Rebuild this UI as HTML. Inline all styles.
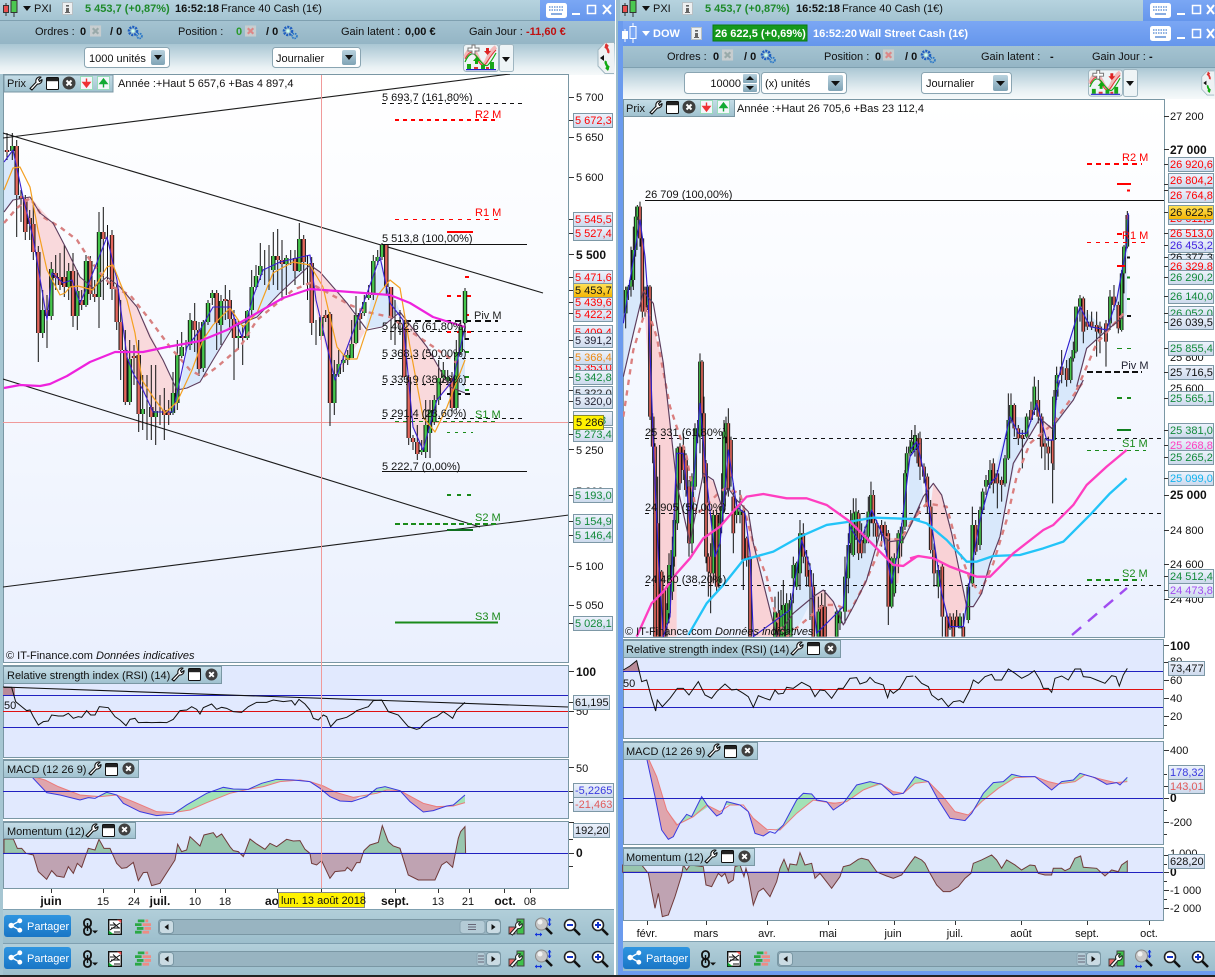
<!DOCTYPE html>
<html><head><meta charset="utf-8"><title>Charts</title>
<style>
html,body{margin:0;padding:0;background:#fff;overflow:hidden}
svg{display:block;font-family:"Liberation Sans",sans-serif;font-size:11px}
text{fill:#111}
.b{font-weight:bold}
.tg{fill:url(#tag);stroke:#7d98a6;stroke-width:1}
.pn{fill:#e1e9fe;stroke:#7a97a4;stroke-width:1}
.bar{fill:url(#bar);stroke:#7a97a4;stroke-width:1}
.sel{fill:#fff;stroke:#8aa5b2;stroke-width:1}
.btn{fill:url(#btn)}
.n{fill:none}
</style></head><body>
<svg width="1215" height="977" viewBox="0 0 1215 977" xmlns="http://www.w3.org/2000/svg">
<defs>
<linearGradient id="tt" x1="0" y1="0" x2="0" y2="1"><stop offset="0" stop-color="#b6d3df"/><stop offset="1" stop-color="#a3c3d1"/></linearGradient>
<linearGradient id="r2" x1="0" y1="0" x2="0" y2="1"><stop offset="0" stop-color="#a4c3d1"/><stop offset="1" stop-color="#94b5c5"/></linearGradient>
<linearGradient id="r3" x1="0" y1="0" x2="0" y2="1"><stop offset="0" stop-color="#a9c6d3"/><stop offset=".75" stop-color="#e9f1f4"/><stop offset="1" stop-color="#f6f9fa"/></linearGradient>
<linearGradient id="bl" x1="0" y1="0" x2="0" y2="1"><stop offset="0" stop-color="#7ba7f4"/><stop offset="1" stop-color="#6596ec"/></linearGradient>
<linearGradient id="bg" x1="0" y1="0" x2="0" y2="1"><stop offset="0" stop-color="#ffffff"/><stop offset=".35" stop-color="#f9fbff"/><stop offset="1" stop-color="#eaf0fe"/></linearGradient>
<linearGradient id="tag" x1="0" y1="0" x2="0" y2="1"><stop offset="0" stop-color="#eef3fd"/><stop offset="1" stop-color="#ccd9ec"/></linearGradient>
<linearGradient id="bar" x1="0" y1="0" x2="0" y2="1"><stop offset="0" stop-color="#c6dee8"/><stop offset="1" stop-color="#9fc1cf"/></linearGradient>
<linearGradient id="btn" x1="0" y1="0" x2="0" y2="1"><stop offset="0" stop-color="#b9d2de"/><stop offset="1" stop-color="#7fa3b5"/></linearGradient>
<linearGradient id="bt" x1="0" y1="0" x2="0" y2="1"><stop offset="0" stop-color="#b2cfda"/><stop offset="1" stop-color="#9cbecc"/></linearGradient>
<linearGradient id="yl" x1="0" y1="0" x2="0" y2="1"><stop offset="0" stop-color="#ffe25a"/><stop offset="1" stop-color="#f4b400"/></linearGradient>
<linearGradient id="sh" x1="0" y1="0" x2="0" y2="1"><stop offset="0" stop-color="#2f95e0"/><stop offset="1" stop-color="#1a76c6"/></linearGradient>
<clipPath id="c1"><rect x="3" y="74" width="565" height="588"/></clipPath>
<clipPath id="c2"><rect x="623" y="99" width="541" height="538"/></clipPath>
<clipPath id="lup"><rect x="3" y="822" width="565" height="31"/></clipPath>
<clipPath id="ldn"><rect x="3" y="853" width="565" height="35"/></clipPath>
<clipPath id="rup"><rect x="623" y="848" width="541" height="24"/></clipPath>
<clipPath id="rdn"><rect x="623" y="872" width="541" height="48"/></clipPath>
<symbol id="wr" viewBox="0 0 14 15"><path d="M1 12.5L7 6.2A4 4 0 0 1 12 1.2L9.5 3.5 10.5 5.5 13 3.6A4 4 0 0 1 8.5 8L3 14z" fill="#fff" stroke="#111" stroke-width="1.1" stroke-linejoin="round"/></symbol>
<symbol id="wn" viewBox="0 0 13 13"><rect x=".5" y=".5" width="12" height="12" fill="#fff" stroke="#111" rx="1"/><rect x="1" y="1" width="11" height="3.2" fill="#222"/></symbol>
<symbol id="cl" viewBox="0 0 14 14"><circle cx="7" cy="7" r="6.5" fill="#3f3f3f"/><path d="M4.5 4.5l5 5m0-5l-5 5" stroke="#fff" stroke-width="2"/></symbol>
<symbol id="ad" viewBox="0 0 13 14"><rect x=".5" y=".5" width="12" height="13" fill="#f4f6fb" stroke="#9db"/><path d="M6.5 2.5v5M3 6.5l3.5 4.5 3.5-4.5z" fill="#e33" stroke="#e33" stroke-width="1.4"/></symbol>
<symbol id="au" viewBox="0 0 13 14"><rect x=".5" y=".5" width="12" height="13" fill="#f4f6fb" stroke="#9db"/><path d="M6.5 11.5v-5M3 7.5l3.5-4.5 3.5 4.5z" fill="#1a3" stroke="#1a3" stroke-width="1.4"/></symbol>
<symbol id="gr" viewBox="0 0 16 15"><circle cx="6" cy="6" r="4" fill="none" stroke="#1f5fc0" stroke-width="2.6" stroke-dasharray="2 1"/><circle cx="6" cy="6" r="1.6" fill="#cfe" /><circle cx="12.5" cy="11" r="2.4" fill="none" stroke="#2b78c8" stroke-width="1.8" stroke-dasharray="1.5 .8"/></symbol>
<symbol id="xg" viewBox="0 0 13 13"><rect width="12" height="12" y=".5" fill="#c7cdcf"/><path d="M3 3.5l6 6m0-6l-6 6" stroke="#9aa" stroke-width="2.4"/></symbol>
<symbol id="xr" viewBox="0 0 13 13"><rect width="12" height="12" y=".5" fill="#c7cdcf"/><path d="M3 3.5l6 6m0-6l-6 6" stroke="#d88" stroke-width="2.4"/></symbol>
<symbol id="kb" viewBox="0 0 21 15"><rect width="21" height="15" rx="2.5" fill="#fff"/><path d="M3 4h15M3 7h15" stroke="#6a98d8" stroke-width="1.4" stroke-dasharray="1.5 1"/><path d="M5 11h11" stroke="#6a98d8" stroke-width="1.6"/></symbol>
<symbol id="ci" viewBox="0 0 15 20"><path d="M3 6v13M11 0v20" stroke="#333" stroke-width="1"/><rect x=".5" y="8.5" width="5" height="7" fill="#e85050" stroke="#333"/><rect x="8" y="3.5" width="6" height="12" fill="#4cc850" stroke="#333"/></symbol>
<symbol id="cw" viewBox="0 0 15 20"><path d="M3 6v13M11 0v20" stroke="#fff" stroke-width="1"/><rect x=".5" y="8.5" width="5" height="7" fill="#fff" stroke="#fff"/><rect x="8" y="3.5" width="6" height="12" fill="#7ba7f4" stroke="#fff"/></symbol>
<symbol id="ib" viewBox="0 0 11 13"><rect width="11" height="13" fill="#d8dfe2"/><rect x=".5" y=".5" width="10" height="12" fill="#eef0f1" stroke="#b8c0c4"/><path d="M4 3h3v1.6H4zM4 6h3v4h1v1H3v-1h1z" fill="#666"/></symbol>
<symbol id="ch" viewBox="0 0 36 28"><rect x=".5" y=".5" width="35" height="27" rx="3" fill="#eef4f6" stroke="#9fb6c1"/><path d="M2 14Q8 -2 14 12T24 16T33 3" fill="none" stroke="#f3b8b8" stroke-width="4"/><path d="M2 15Q9 2 14 14T24 18T33 6" fill="none" stroke="#d33" stroke-width="1"/><path d="M2 18Q8 4 15 14T25 21T33 9" fill="none" stroke="#1a1" stroke-width="1.2"/><path d="M5 4h4v-3h3v3h4v3h-4v3h-3v-3h-4z" fill="#fff" stroke="#777"/><path d="M12 20h3v-3h2l-3.5-4-3.5 4h2z" fill="#1a1"/><path d="M23 4h3v3h2l-3.5 4-3.5-4h2z" fill="#d22"/><path d="M4 20h4v5H4zM18 21h4v4h-4zM27 18h4v7h-4z" fill="#19a619"/><path d="M11 23h4v2h-4zM23 23h3v2h-3z" fill="#d33"/><path d="M3 25.6h30" stroke="#22c" stroke-width="1.2"/></symbol>
<symbol id="sd" viewBox="0 0 18 32"><path d="M17 .5H8L1 8v16l7 7.5h9" fill="#eef2f4" stroke="#9fb6c1"/><path d="M3 16l4-3v6z" fill="#111"/><path d="M10 2c-3 3 3 6 1 9M8 6l3-3" stroke="#d33" stroke-width="2.4" fill="none"/><path d="M10 28c3-3-3-6-1-9M12 24l-3 3" stroke="#1a1" stroke-width="2.4" fill="none"/></symbol>
<symbol id="sha" viewBox="0 0 16 16"><path d="M12.5 3L3.5 8l9 5" stroke="#fff" stroke-width="1.5" fill="none"/><circle cx="12.6" cy="3" r="2.6" fill="#fff"/><circle cx="3.4" cy="8" r="2.9" fill="#fff"/><circle cx="12.6" cy="13" r="2.6" fill="#fff"/></symbol>
<symbol id="lk" viewBox="0 0 16 18"><rect x="2" y="1" width="7" height="8" rx="3.4" fill="none" stroke="#111" stroke-width="1.8"/><rect x="2" y="9" width="7" height="8" rx="3.4" fill="none" stroke="#111" stroke-width="1.8"/><path d="M5.5 5v8" stroke="#111" stroke-width="1.4"/><path d="M10 12.5h6l-3 3z" fill="#111"/></symbol>
<symbol id="dc" viewBox="0 0 14 16"><rect x=".7" y=".7" width="12.6" height="14.6" fill="#fff" stroke="#111" stroke-width="1.4"/><path d="M2 11L12 4M2 6h6M6 13h6M3 9h9M5 3.5L11 9" stroke="#111" stroke-width="1"/><path d="M9 .7h4.3v3.3z" fill="#e55"/><path d="M.7 11.5V15.3h5z" fill="#1a3"/></symbol>
<symbol id="br" viewBox="0 0 17 16"><path d="M0 4h7v3H0zM0 12h7v3H0zM2 8h7v3H2zM3 0h7v3H3z" fill="#2ba845"/><path d="M8 4h9v3H8zM10 8h7v3h-7zM8 12h7v3H8zM11 0h3v3h-3z" fill="#ee8c84"/></symbol>
<symbol id="wc" viewBox="0 0 17 18"><rect x="1" y="9" width="6" height="7" fill="#e66" stroke="#444"/><rect x="9" y="1" width="7" height="15" fill="#3fc24a" stroke="#444"/><path d="M2 15.5L8 9A3.6 3.6 0 0 1 12.5 4L10.5 6l1 1.6L14 5.6A3.6 3.6 0 0 1 10 10.5L4.5 17z" fill="#fff" stroke="#222"/></symbol>
<symbol id="za" viewBox="0 0 20 20"><circle cx="7.5" cy="7" r="6" fill="#c8c8c8" stroke="#888"/><circle cx="6" cy="5" r="2.5" fill="#f2f2f2"/><path d="M12 11l6 6" stroke="#111" stroke-width="2.6"/><path d="M1 17.5h7M15.5 1v8" stroke="#13d" stroke-width="1.3"/><path d="M1 17.5l2-2v4zM8 17.5l-2-2v4zM15.5 1l-2 2.4h4zM15.5 9l-2-2.4h4z" fill="#13d"/></symbol>
<symbol id="zm" viewBox="0 0 18 18"><circle cx="7" cy="7" r="5.5" fill="#fff" stroke="#222" stroke-width="1.6"/><path d="M4 7h6" stroke="#13c" stroke-width="2"/><path d="M11 11l6 6" stroke="#111" stroke-width="2.6"/></symbol>
<symbol id="zp" viewBox="0 0 18 18"><circle cx="7" cy="7" r="5.5" fill="#fff" stroke="#222" stroke-width="1.6"/><path d="M4 7h6M7 4v6" stroke="#13c" stroke-width="2"/><path d="M11 11l6 6" stroke="#111" stroke-width="2.6"/></symbol>
<path id="m1" transform="translate(0,660) scale(.3333)" d="M12 580V537L40 537 52 565 65 565 78 580 100 585 115 635 140 658 155 632 170 648 192 652 205 620 220 640 232 610 245 622 265 565 285 570 297 538 312 565 330 565 350 610 365 625 380 623 400 607 415 662 430 638 442 637 455 677 480 670 525 600 533 553 545 575 560 570 570 530 600 558 612 525 640 518 650 532 665 522 690 560 700 572 715 575 730 590 750 537 770 552 795 568 810 550 830 560 860 538 880 543 900 542 915 568 930 580 935 610 950 615 965 602 990 655 1005 635 1035 632 1042 622 1055 633 1070 608 1080 608 1092 572 1110 555 1135 547 1147 497 1165 545 1180 558 1200 565 1225 645 1255 660 1305 660 1325 615 1340 605 1358 622 1375 535 1382 515 1395 500 1397 580z"/>
<path id="m2" transform="translate(620,630) scale(.3333)" d="M8 727V705L65 705 85 730 105 835 115 790 127 860 145 855 165 800 185 735 190 705 200 720 210 705 250 710 258 765 275 770 295 730 305 740 315 730 325 760 340 750 345 710 360 705 372 740 378 715 385 740 400 825 415 785 430 775 450 800 470 755 480 715 492 688 505 722 510 702 530 705 540 668 555 705 575 700 585 745 600 730 635 775 660 740 670 710 690 705 715 688 725 685 745 690 770 725 780 730 800 738 820 745 845 735 870 700 885 680 905 690 915 700 930 730 950 765 970 785 990 785 1015 770 1035 745 1053 730 1060 700 1085 690 1115 675 1130 690 1145 715 1160 690 1185 705 1205 720 1230 705 1245 707 1255 730 1275 735 1295 735 1300 715 1325 715 1335 722 1350 715 1365 685 1382 678 1390 712 1430 715 1455 738 1475 720 1495 725 1505 705 1522 693 1522 727z"/>
</defs>

<rect width="1215" height="977" fill="#fff"/>

<!-- LEFT WINDOW chrome -->
<rect x="0" y="0" width="615" height="21" fill="url(#tt)"/>
<rect x="540" y="0" width="75" height="21" fill="url(#bl)"/>
<path d="M0 20.5H540M0 43.5H615" stroke="#7fa0b0"/>
<rect x="0" y="21" width="615" height="23" fill="url(#r2)"/>
<rect x="0" y="44" width="615" height="31" fill="url(#r3)"/>
<use href="#ci" x="3" y="-3" width="15" height="20"/>
<path d="M23 6h8l-4 5z" fill="#111"/>
<text x="34" y="12">PXI</text>
<use href="#ib" x="62" y="2" width="11" height="13"/>
<text x="85" y="12" style="fill:#1e8a2a" class="b">5 453,7 (+0,87%)</text>
<text x="175" y="12" class="b">16:52:18</text>
<text x="221" y="12">France 40 Cash (1€)</text>
<use href="#kb" x="546" y="3" width="21" height="15"/>
<path d="M572 14h8" stroke="#fff" stroke-width="2"/><rect x="587.5" y="5.5" width="8" height="8" class="n" stroke="#fff" stroke-width="1.5"/><path d="M603 5l8 9m0-9l-8 9" stroke="#fff" stroke-width="2"/>

<text x="35" y="35">Ordres :</text><text x="80" y="35" class="b">0</text><use href="#xg" x="90" y="25" width="12" height="12"/><text x="110" y="35" class="b">/ 0</text><use href="#gr" x="127" y="25" width="16" height="15"/>
<text x="178" y="35">Position :</text><text x="236" y="35" class="b" style="fill:#2a9a2a">0</text><use href="#xr" x="245" y="25" width="12" height="12"/><text x="266" y="35" class="b">/ 0</text><use href="#gr" x="282" y="25" width="16" height="15"/>
<text x="341" y="35">Gain latent :</text><text x="405" y="35" class="b">0,00 €</text>
<text x="469" y="35">Gain Jour :</text><text x="526" y="35" class="b" style="fill:#c01010">-11,60 €</text>

<rect x="84.5" y="47.5" width="85" height="20" rx="3" class="sel"/><text x="89" y="62">1000 unités</text><rect x="151" y="50" width="14" height="15" rx="2" class="btn"/><path d="M154 55h8l-4 5z" fill="#111"/>
<rect x="272.5" y="47.5" width="88" height="20" rx="3" class="sel"/><text x="276" y="62">Journalier</text><rect x="342" y="50" width="14" height="15" rx="2" class="btn"/><path d="M345 55h8l-4 5z" fill="#111"/>
<use href="#ch" x="463" y="44" width="36" height="28"/><rect x="499.5" y="44.5" width="14" height="27" rx="2" fill="#eef4f6" stroke="#9fb6c1"/><path d="M502 57h8l-4 5z" fill="#111"/>
<use href="#sd" x="597" y="42" width="18" height="32"/>

<!-- RIGHT WINDOW chrome -->
<rect x="616" y="0" width="4" height="977" fill="#9bbccb"/>
<rect x="620" y="0" width="595" height="21" fill="url(#tt)"/>
<rect x="1143" y="0" width="72" height="21" fill="url(#bl)"/>
<rect x="618" y="21" width="597" height="25" fill="url(#bl)"/>
<rect x="618" y="21" width="5" height="956" fill="#6b9bee"/>
<rect x="623" y="46" width="592" height="22" fill="url(#r2)"/>
<rect x="623" y="67" width="592" height="32" fill="url(#r3)"/>
<path d="M623 67.5H1215" stroke="#7fa0b0"/>
<use href="#ci" x="622" y="-3" width="15" height="20"/>
<path d="M642 6h8l-4 5z" fill="#111"/><text x="653" y="12">PXI</text>
<use href="#ib" x="682" y="2" width="11" height="13"/>
<text x="705" y="12" class="b" style="fill:#1e8a2a">5 453,7 (+0,87%)</text>
<text x="796" y="12" class="b">16:52:18</text>
<text x="842" y="12">France 40 Cash (1€)</text>
<use href="#kb" x="1150" y="3" width="21" height="15"/>
<path d="M1177 14h8" stroke="#fff" stroke-width="2"/><rect x="1192.5" y="5.5" width="8" height="8" class="n" stroke="#fff" stroke-width="1.5"/><path d="M1207 5l7 9m0-9l-7 9" stroke="#fff" stroke-width="2"/>
<use href="#cw" x="622" y="23" width="15" height="20"/>
<path d="M642 31h8l-4 5z" fill="#fff"/><text x="653" y="37" class="b" style="fill:#fff">DOW</text>
<use href="#ib" x="691" y="27" width="11" height="13"/>
<rect x="713" y="25" width="94" height="16" fill="#16991c" stroke="#0c7a12"/>
<text x="715" y="37" class="b" style="fill:#fff">26 622,5 (+0,69%)</text>
<text x="813" y="37" style="fill:#fff" class="b">16:52:20</text>
<text x="859" y="37" style="fill:#fff" class="b">Wall Street Cash (1€)</text>
<use href="#kb" x="1150" y="26" width="21" height="15"/>
<path d="M1177 38h8" stroke="#fff" stroke-width="2"/><rect x="1192.5" y="29.5" width="8" height="8" class="n" stroke="#fff" stroke-width="1.5"/><path d="M1207 29l7 9m0-9l-7 9" stroke="#fff" stroke-width="2"/>

<text x="667" y="60">Ordres :</text><text x="713" y="60" class="b">0</text><use href="#xg" x="722" y="49" width="12" height="12"/><text x="744" y="60" class="b">/ 0</text><use href="#gr" x="760" y="49" width="16" height="15"/>
<text x="824" y="60">Position :</text><text x="875" y="60" class="b">0</text><use href="#xr" x="883" y="49" width="12" height="12"/><text x="905" y="60" class="b">/ 0</text><use href="#gr" x="920" y="49" width="16" height="15"/>
<text x="981" y="60">Gain latent :</text><text x="1050" y="60" class="b">-</text>
<text x="1092" y="60">Gain Jour :</text><text x="1149" y="60" class="b">-</text>

<rect x="684.5" y="72.5" width="75" height="21" rx="3" class="sel"/><text x="741" y="87" text-anchor="end">10000</text>
<rect x="743" y="74" width="14" height="9" rx="1" class="btn"/><rect x="743" y="84" width="14" height="8" rx="1" class="btn"/><path d="M746 80l4-4 4 4zM746 86h8l-4 4z" fill="#111"/>
<rect x="761.5" y="72.5" width="85" height="21" rx="3" class="sel"/><text x="765" y="87">(x) unités</text><rect x="828" y="75" width="15" height="16" rx="2" class="btn"/><path d="M831 81h9l-4.500 5z" fill="#111"/>
<rect x="921.5" y="72.5" width="90" height="21" rx="3" class="sel"/><text x="926" y="87">Journalier</text><rect x="993" y="75" width="15" height="16" rx="2" class="btn"/><path d="M996 81h9l-4.500 5z" fill="#111"/>
<use href="#ch" x="1088" y="69" width="35" height="28"/><rect x="1123.5" y="69.500" width="14" height="27" rx="2" fill="#eef4f6" stroke="#9fb6c1"/><path d="M1126 81h8l-4 5z" fill="#111"/>
<use href="#sd" x="1201" y="67" width="14" height="32"/>

<!-- LEFT CHART -->
<rect x="0" y="74" width="3" height="903" fill="#a6c6d2"/>
<rect x="3.500" y="74.500" width="565" height="588" fill="url(#bg)" stroke="#7a97a4"/>
<g clip-path="url(#c1)">
<path d="M3 422.500H568" stroke="#f09a9a"/>
<g transform="translate(0,130) scale(.3333)">
<path fill="#d8e8fb" d="M12 95L40 60 60 180 60 205 40 210 12 245zM540 780L600 755 640 690 700 590 770 560 840 490 930 410 930 375 840 395 790 420 760 500 725 620 690 530 640 530 600 600 560 650z"/>
<path fill="#f9d9dc" d="M60 205L90 200 160 280 240 440 270 465 240 520 220 460 190 465 150 430 140 570 100 320zM330 420L410 530 490 690 530 790 510 845 460 845 430 780 380 680 345 450z"/>
</g>
<g transform="translate(310,200) scale(.3333)">
<path fill="#f9d9dc" d="M0 195L30 215 110 310 165 395 75 540 30 380 0 250zM270 335L350 440 420 560 380 600 340 750 310 680 280 360z"/>
<path fill="#d8e8fb" d="M165 385L210 170 240 260 270 335 215 380zM425 570L465 380 465 580z"/>
</g>
<!-- channel lines -->
<g stroke="#1c1c1c" stroke-width="1.1" fill="none">
<path d="M3 138L510 74M3 133L543 293M3 379L480 527M3 587L569 515"/>
</g>
<!-- fib -->
<g fill="none" stroke="#111" stroke-width="1">
<path stroke-dasharray="4 4" d="M382 103.500H523M382 331.500H523M382 358.500H523M382 384.500H523M382 418.500H523"/>
<path d="M382 244.500H527M382 471.500H527"/>
</g>
<!-- pivots -->
<g fill="none" stroke-width="2">
<path stroke="#f00" stroke-dasharray="4 4" d="M395 120H498"/>
<path stroke="#f00" stroke-width="1" stroke-dasharray="4 5" d="M395 219.500H498"/>
<path stroke="#111" stroke-dasharray="6 4" d="M395 321H498"/>
<path stroke="#1a8a1a" stroke-width="1" stroke-dasharray="4 4" d="M395 421.500H498"/>
<path stroke="#1a8a1a" stroke-dasharray="5 3" d="M395 524H498"/>
<path stroke="#1a8a1a" d="M395 622.500H498"/>
<path stroke="#f00" d="M447 232H473"/>
<path stroke="#f00" stroke-dasharray="4 6" d="M447 296H473"/>
<path stroke="#f00" stroke-dasharray="4 6" d="M447 332H473"/>
<path stroke="#f00" d="M465 277H469M465 315H469"/>
<path stroke="#111" d="M465 339H469"/>
<path stroke="#1a8a1a" d="M465 352H469M465 377H469M465 390H469"/>
<path stroke="#111" stroke-dasharray="5 4" d="M447 394H473"/>
<path stroke="#1a8a1a" stroke-width="1" stroke-dasharray="3 5" d="M447 432.500H473"/>
<path stroke="#1a8a1a" stroke-dasharray="4 6" d="M447 495H473"/>
<path stroke="#0f6f1f" d="M447 530H473"/>
</g>
<!-- wicks -->
<path stroke="#111" stroke-width="1" fill="none" d="M7 133V160M12.300 133V160M16.700 140V237M21 190V222M25.300 195V240M29.700 210V240M33.300 205V260M38.300 246V362M42.700 290V338M47 295V348M51.300 262V320M55.700 255V290M60 253V290M64.300 245V297M68.700 263V300M73 253V327M77.300 270V330M81.700 290V310M86 255V307M90.300 256V300M94.700 280V302M99 212V328M103.300 207V300M107.500 225V285M112 230V300M116.700 285V330M120.700 300V380M125.300 330V405M129.700 340V405M134 345V385M138.700 340V432M142.700 375V430M147 375V440M151.300 365V440M155.700 365V445M160 395V425M164.300 388V440M168.700 400V425M173 372V415M177.300 340V410M181.700 332V358M186 340V352M190 313V350M194.700 303V352M199 322V376M203.300 320V372M208 300V325M212.300 290V305M216.700 290V350M221 295V345M225.300 285V320M229.700 290V330M234 310V380M238.300 320V350M242.700 325V365M247.300 310V340M251.700 270V315M256 265V290M260.300 243V280M264.700 250V285M269 245V290M273.300 232V285M277.700 229V290M282 240V298M286.300 255V295M290.700 250V265M295 250V285M299.300 223V272M303.700 235V285M307.500 255V300M311.700 257V335M316 320V345M321.300 315V340M325.700 310V322M330 312V426M334.300 360V415M338.700 350V377M343.300 355V372M347.700 350V365M351.700 320V358M356 296V344M360 310V330M364.300 295V316M368.700 285V300M373.300 255V300M377.700 250V265M382 243V260M386.300 245V295M391 287V340M395 300V345M400 310V335M404.300 320V380M408.700 375V445M413 435V450M417.300 425V460M421.700 440V455M425.700 400V458M430 400V458M434.300 395V425M438.700 360V405M443.300 362V382M447.700 370V385M452 372V412M456.300 340V410M460.700 320V355M465 288V340"/>
<!-- bodies -->
<g fill="none" stroke="#111" stroke-width="4.400"><path id="lg" d="M12.300 146V151M42.700 310V333M51.300 269V316M68.700 271V287M77.300 291V316M86 261V305M99 232V297M129.700 359V402M142.700 409V414M155.700 411V417M173 393V413M177.300 355V403M181.700 347V356M190 320V345M203.300 322V368M208 303V322M212.300 293V298M221 301V325M238.300 336V338M247.300 311V338M251.700 287V310M256 276V287M260.300 266V275M273.300 256V270M286.300 258V264M299.300 239V271M321.300 317V336M334.300 374V403M338.700 364V374M343.300 360V363M347.700 355V360M351.700 344V358M356 315V343M364.300 302V313M368.700 295V298M373.300 261V295M377.700 257V261M382 245V257M421.700 450V452M425.700 425V452M430 410V433M434.300 400V422M438.700 378V400M443.300 370V378M447.700 377V381M456.300 352V408M460.700 327V352M465 291V323"/></g>
<g fill="none"><use href="#lg" stroke="#45c64c" stroke-width="2.400"/></g>
<g fill="none" stroke="#111" stroke-width="4.400"><path id="lr" d="M7 150V152M16.700 146V195M21 196V199M25.300 199V232M29.700 218V224M33.300 224V252M38.300 252V333M47 310V316M55.700 273V278M60 277V285M64.300 277V287M73 271V316M81.700 300V305M90.300 261V294M94.700 294V297M103.300 232V239M112 235V289M116.700 289V322M120.700 322V350M125.300 350V402M134 356V358M138.700 355V414M151.300 407V417M164.300 410V415M168.700 412V415M194.700 321V330M199 330V369M216.700 293V323M225.300 299V301M229.700 300V319M234 319V338M242.700 336V338M277.700 256V260M282 260V264M295 258V271M303.700 239V262M311.700 263V323M325.700 315V318M330 314V403M360 313V319M386.300 245V287M391 287V318M404.300 327V377M408.700 377V438M413 438V442M417.300 442V454M452 378V408"/></g>
<g fill="none"><use href="#lr" stroke="#e4675d" stroke-width="2.400"/></g>
<!-- curves -->
<g fill="none" stroke-linejoin="round">
<path stroke="#d88080" stroke-width="2.400" stroke-dasharray="5 5" d="M4 223L17 208 30 198 43 217 60 227 77 240 90 260 100 273 113 287 130 295 150 320 170 347 190 370 203 377 217 367 240 347 257 320 293 290 310 283 350 305 367 312 390 317 413 333 457 363"/>
<path stroke="#5d3d5d" stroke-width="1.100" d="M4 212L13 200 30 197 40 213 53 223 67 250 80 277 93 288 107 277 120 287 137 307 150 337 163 360 177 390 187 388 200 382 213 360 233 327 257 317 280 293 310 265 320 272 347 303 367 330 382 327 400 312 427 347 450 387 465 393"/>
<path stroke="#3a20d0" stroke-width="1.100" d="M4 162L13 150 23 197 33 237 47 320 52 273 63 283 72 280 80 303 90 280 107 237 117 280 127 357 133 373 143 390 153 412 173 412 187 347 200 330 213 307 230 307 242 337 253 297 263 270 280 262 310 255 316 300 335 380 360 313 380 257 390 303 403 320 413 427 423 450 437 400 453 380 465 327"/>
<path stroke="#f4a020" stroke-width="1.200" d="M4 190L13 168 20 167 30 187 38 230 47 270 60 295 65 293 70 287 78 286 93 290 107 267 113 265 127 300 135 333 142 380 153 397 165 413 177 402 192 370 203 340 213 325 230 308 243 327 257 313 273 273 293 262 310 265 323 287 337 347 347 359 357 359 378 295 390 280 400 288 410 347 423 417 435 432 447 407 465 360"/>
<path stroke="#ee22dd" stroke-width="2.200" d="M4 388L20 385 40 386 50 384 67 376 90 362 115 352 143 352 167 347 200 341 227 330 257 313 283 298 310 289 337 291 390 295 410 303 433 317 465 327"/>
</g>
</g>
<!-- left chart texts -->
<g>
<text x="382" y="101">5 693,7 (161,80%)</text><text x="382" y="242">5 513,8 (100,00%)</text><text x="382" y="330">5 402,6 (61,80%)</text><text x="382" y="357">5 368,3 (50,00%)</text><text x="382" y="383">5 333,9 (38,20%)</text><text x="382" y="417">5 291,4 (23,60%)</text><text x="382" y="470">5 222,7 (0,00%)</text>
<text x="475" y="118" style="fill:#f00">R2 M</text><text x="475" y="216" style="fill:#f00">R1 M</text><text x="474" y="319" style="fill:#222">Piv M</text><text x="475" y="418" style="fill:#1a8a1a">S1 M</text><text x="475" y="521" style="fill:#1a8a1a">S2 M</text><text x="475" y="620" style="fill:#1a8a1a">S3 M</text>
<text x="6" y="659">© IT-Finance.com</text><text x="96" y="659" font-style="italic">Données indicatives</text>
</g>
<rect x="4" y="75" width="109" height="17" class="bar"/>
<text x="7" y="87">Prix</text><use href="#wr" x="29" y="76" width="14" height="15"/><use href="#wn" x="46" y="77" width="13" height="13"/><use href="#cl" x="62" y="76" width="14" height="14"/><use href="#ad" x="80" y="76" width="13" height="14"/><use href="#au" x="97" y="76" width="13" height="14"/>
<text x="118" y="87">Année :+Haut 5 657,6 +Bas 4 897,4</text>

<!-- left axis -->
<path d="M569 97.500h5M569 137.500h5M569 177.500h5M569 254.500h5M569 449.500h5M569 566.500h5M569 605.500h5M569 120.500h4M569 219.500h4M569 233.500h4M569 277.500h4M569 290.500h4M569 302.500h4M569 313.500h4M569 340.500h4M569 357.500h4M569 377.500h4M569 390.500h4M569 401.500h4M569 422.500h4M569 434.500h4M569 495.500h4M569 521.500h4M569 535.500h4M569 623.500h4" stroke="#333"/>
<text x="576" y="101">5 700</text><text x="576" y="141">5 650</text><text x="576" y="181">5 600</text><text x="576" y="259" class="b" font-size="12">5 500</text><text x="576" y="454">5 250</text><text x="576" y="570">5 100</text><text x="576" y="609">5 050</text>
<text x="576" y="495">5 200</text>
<g>
<rect x="573.500" y="113.500" width="39" height="14" class="tg"/><text x="575" y="124" style="fill:#f00">5 672,3</text>
<rect x="573.500" y="212.500" width="39" height="14" class="tg"/><text x="575" y="223" style="fill:#f00">5 545,5</text>
<rect x="573.500" y="226.500" width="39" height="14" class="tg"/><text x="575" y="237" style="fill:#f00">5 527,4</text>
<rect x="573.500" y="270.500" width="39" height="14" class="tg"/><text x="575" y="281" style="fill:#f00">5 471,6</text>
<rect x="573.500" y="307.500" width="39" height="14" class="tg"/><text x="575" y="318" style="fill:#f00">5 422,2</text>
<rect x="573.500" y="295.500" width="39" height="14" class="tg"/><text x="575" y="306" style="fill:#f00">5 439,6</text>
<rect x="573.500" y="283.500" width="39" height="14" fill="url(#yl)" stroke="#7d98a6"/><text x="575" y="294">5 453,7</text>
<rect x="573.500" y="325.500" width="39" height="10" class="tg"/><text x="575" y="336" style="fill:#f00">5 409,4</text>
<rect x="573.500" y="360.500" width="39" height="12" class="tg"/><text x="575" y="371" style="fill:#f00">5 353,0</text>
<rect x="573.500" y="350.500" width="39" height="14" class="tg"/><text x="575" y="361" style="fill:#f08a10">5 368,4</text>
<rect x="573.500" y="333.500" width="39" height="14" class="tg"/><text x="575" y="344" style="fill:#223">5 391,2</text>
<rect x="573.500" y="370.500" width="39" height="14" class="tg"/><text x="575" y="381" style="fill:#128a3a">5 342,8</text>
<rect x="573.500" y="386.500" width="39" height="10" class="tg"/><text x="575" y="397" style="fill:#222">5 322,0</text>
<rect x="573.500" y="394.500" width="39" height="14" class="tg"/><text x="575" y="405" style="fill:#223">5 320,0</text>
<rect x="573.500" y="411.500" width="39" height="14" class="tg"/><text x="600" y="424" style="fill:#128a3a">8</text>
<rect x="573.500" y="427.500" width="39" height="14" class="tg"/><text x="575" y="438" style="fill:#128a3a">5 273,4</text>
<rect x="573.500" y="415.500" width="30" height="14" fill="#fff200" stroke="#8a8a30"/><text x="576" y="426">5 286</text>
<rect x="573.500" y="488.500" width="39" height="14" class="tg"/><text x="575" y="499" style="fill:#128a3a">5 193,0</text>
<rect x="573.500" y="514.500" width="39" height="14" class="tg"/><text x="575" y="525" style="fill:#128a3a">5 154,9</text>
<rect x="573.500" y="528.500" width="39" height="14" class="tg"/><text x="575" y="539" style="fill:#128a3a">5 146,4</text>
<rect x="573.500" y="616.500" width="39" height="14" class="tg"/><text x="575" y="627" style="fill:#128a3a">5 028,1</text>
</g>

<!-- LEFT RSI -->
<rect x="3.500" y="665.500" width="565" height="92" class="pn"/>
<path d="M3 687L12 687H15V695H3z" fill="#b88a98"/>
<path d="M3 695.500H568M3 727.500H568" stroke="#2020c0"/><path d="M3 711.500H568" stroke="#e01010"/>
<g fill="none" stroke="#111" stroke-width="3">
<path transform="translate(0,660) scale(.3333)" d="M12 82H35L47 125 65 140 80 152 90 150 100 170 115 195 130 185 145 183 155 165 175 168 190 168 205 160 220 175 235 170 245 172 260 152 272 165 285 165 298 140 325 143 345 170 360 180 378 197 390 178 405 175 415 188 440 187 455 188 480 187 500 188 520 178 540 152 560 150 575 140 590 148 600 162 610 143 635 132 650 148 665 142 680 145 700 155 725 157 745 140 770 127 800 127 820 120 850 125 875 122 885 135 897 118 915 132 930 150"/>
<path transform="translate(310,660) scale(.3333)" d="M0 150L10 175 25 180 40 165 50 170 62 200 80 180 110 172 130 160 140 152 160 145 175 140 190 122 215 120 235 155 265 165 295 200 320 208 330 205 345 188 365 175 380 170 400 155 415 165 428 175 440 150 465 127"/>
</g>
<path d="M3 687L568 707" stroke="#111" stroke-width="1.100"/>
<text x="4" y="709">50</text>
<rect x="3.500" y="666.500" width="218" height="17" class="bar"/><text x="7" y="679">Relative strength index (RSI) (14)</text><use href="#wr" x="171" y="667" width="14" height="15"/><use href="#wn" x="188" y="668" width="13" height="13"/><use href="#cl" x="205" y="668" width="13" height="13"/>
<path d="M569 671.500h5M569 711.500h5M569 702.500h4" stroke="#333"/>
<text x="576" y="676" class="b" font-size="12">100</text><text x="576" y="715">50</text>
<rect x="573.500" y="695.500" width="36" height="14" class="tg"/><text x="575" y="706">61,195</text>

<!-- LEFT MACD -->
<rect x="3.500" y="759.500" width="565" height="59" class="pn"/>
<g transform="translate(0,660) scale(.3333)">
<path fill="#dfa5ad" d="M100 350L135 360 175 380 240 405 300 410 265 413 240 420 180 405 140 398 95 350zM350 405L400 425 470 455 520 458 470 467 420 455 370 430z"/>
<path fill="#a2e2b6" d="M300 408L320 397 350 405zM520 458L560 435 620 400 670 382 700 387 745 388 690 400 620 428 570 450zM745 388L785 370 830 358 880 360 930 365 900 360 840 365 790 380z"/>
<path fill="none" stroke="#ec7a7a" stroke-width="3" d="M100 350L135 360 175 380 240 405 300 410 350 405 400 425 470 455 520 458 570 450 620 428 690 400 745 388 790 380 840 365 900 360 930 365"/>
<path fill="none" stroke="#3a3ae0" stroke-width="3" d="M95 350L140 398 180 405 240 420 265 413 285 415 320 397 350 405 370 430 420 455 470 467 520 462 560 435 620 400 670 382 700 387 745 388 785 370 830 358 880 360 930 365"/>
</g>
<g transform="translate(310,660) scale(.3333)">
<path fill="#dfa5ad" d="M0 365L40 378 80 398 130 412 150 410 125 425 90 423 60 410 30 385zM270 392L340 430 380 440 405 438 370 452 340 456 300 425z"/>
<path fill="#a2e2b6" d="M150 410L170 410 200 385 225 380 270 392 230 390 200 400zM430 437L465 405 465 428z"/>
<path fill="none" stroke="#ec7a7a" stroke-width="3" d="M0 365L40 378 80 398 130 412 200 400 230 390 270 392 340 430 380 440 430 438 465 428"/>
<path fill="none" stroke="#3a3ae0" stroke-width="3" d="M0 365L30 385 60 410 90 423 125 425 170 410 200 385 225 380 270 392 300 425 340 456 370 452 410 438 430 435 465 405"/>
</g>
<path d="M3 791.500H568" stroke="#2020c0"/>
<rect x="3.500" y="760.500" width="135" height="17" class="bar"/><text x="7" y="773">MACD (12 26 9)</text><use href="#wr" x="88" y="761" width="14" height="15"/><use href="#wn" x="105" y="763" width="13" height="13"/><use href="#cl" x="122" y="762" width="13" height="13"/>
<path d="M569 767.500h5M569 791.500h5M569 802.500h4" stroke="#333"/>
<text x="576" y="772">50</text>
<rect x="573.500" y="783.500" width="40" height="14" class="tg"/><text x="575" y="794" style="fill:#3a3ae0">-5,2265</text>
<rect x="573.500" y="797.500" width="40" height="14" class="tg"/><text x="575" y="808" style="fill:#e05a5a">-21,463</text>

<!-- LEFT MOMENTUM -->
<rect x="3.500" y="821.500" width="565" height="67" class="pn"/>
<g clip-path="url(#lup)"><use href="#m1" fill="#98c6ae"/></g>
<g clip-path="url(#ldn)"><use href="#m1" fill="#bfa3b2"/></g>
<use href="#m1" fill="none" stroke="#703a3a" stroke-width="3"/>
<path d="M3 853.500H568" stroke="#2020c0"/>
<rect x="3.500" y="822.500" width="132" height="16" class="bar"/><text x="7" y="835">Momentum (12)</text><use href="#wr" x="85" y="823" width="14" height="15"/><use href="#wn" x="102" y="824" width="13" height="13"/><use href="#cl" x="118" y="823" width="13" height="13"/>
<path d="M569 822.500h5M569 839.500h4M569 853.500h5M569 866.500h4" stroke="#333"/>
<text x="576" y="857" class="b" font-size="12">0</text>
<rect x="573.500" y="823.500" width="36" height="14" class="tg"/><text x="575" y="834">192,20</text>

<!-- cursor vertical line -->
<path d="M321.500 75V888" stroke="#f09a9a"/>

<!-- left x axis -->
<path d="M51.500 889v4M103.500 889v4M134.500 889v4M160.500 889v4M195.500 889v4M225.500 889v4M277.500 889v4M321.500 889v4M395.500 889v4M438.500 889v4M469.500 889v4M504.500 889v4M530.500 889v4" stroke="#333"/>
<g text-anchor="middle"><text x="51" y="905" class="b" font-size="12">juin</text><text x="103" y="905">15</text><text x="134" y="905">24</text><text x="160" y="905" class="b" font-size="12">juil.</text><text x="195" y="905">10</text><text x="225" y="905">18</text><text x="272" y="905" class="b" font-size="12">ao</text><text x="438" y="905">13</text><text x="468" y="905">21</text><text x="395" y="905" class="b" font-size="12">sept.</text><text x="505" y="905" class="b" font-size="12">oct.</text><text x="530" y="905">08</text></g>
<rect x="278.500" y="892.500" width="86" height="15" fill="#fff200" stroke="#888"/><text x="281" y="904">lun. 13 août 2018</text>

<!-- left bottom bars -->
<rect x="3" y="909" width="611" height="35" fill="url(#bt)"/><path d="M3 909.500H614M3 943.500H614" stroke="#7fa0b0"/>
<rect x="3" y="944" width="611" height="31" fill="url(#bt)"/>
<rect x="0" y="975" width="616" height="2" fill="#222"/>
<g id="lb1"><rect x="4" y="915" width="67" height="22" rx="3" fill="url(#sh)"/><use href="#sha" x="8" y="918" width="15" height="15"/><text x="27" y="930" style="fill:#fff" font-size="11">Partager</text>
<use href="#lk" x="82" y="918" width="16" height="18"/><use href="#dc" x="108" y="919" width="14" height="16"/><use href="#br" x="135" y="919" width="16" height="16"/>
<rect x="158.500" y="919.500" width="342" height="15" rx="3" fill="#98b4c1" stroke="#7a97a4"/><rect x="159.500" y="920.500" width="14" height="13" rx="3" fill="#cadbe3" stroke="#7a97a4"/><path d="M168.500 924v6l-4-3z" fill="#111"/>
<rect x="486.500" y="920.500" width="14" height="13" rx="3" fill="#cadbe3" stroke="#7a97a4"/><path d="M491.500 924v6l4-3z" fill="#111"/></g>
<rect x="460" y="920.500" width="25" height="13" rx="3" fill="#b4cbd6" stroke="#8aa5b2"/><path d="M468 924.500h8M468 927h8M468 929.500h8" stroke="#667"/>
<use href="#wc" x="508" y="918" width="17" height="18"/><use href="#za" x="534" y="917" width="20" height="20"/><use href="#zm" x="563" y="918" width="18" height="18"/><use href="#zp" x="591" y="918" width="18" height="18"/>
<use href="#lb1" y="32"/>
<rect x="477" y="952.500" width="8" height="13" rx="2" fill="#b4cbd6" stroke="#8aa5b2"/><path d="M478 956h6M478 959h6M478 962h6" stroke="#667"/>
<use href="#wc" x="508" y="950" width="17" height="18"/><use href="#za" x="534" y="949" width="20" height="20"/><use href="#zm" x="563" y="950" width="18" height="18"/><use href="#zp" x="591" y="950" width="18" height="18"/>

<!-- RIGHT CHART -->
<rect x="623.500" y="99.500" width="541" height="538" fill="url(#bg)" stroke="#7a97a4"/>
<g clip-path="url(#c2)">
<g transform="translate(620,190) scale(.3333)">
<path fill="#d8e8fb" d="M10 400L30 270 60 90 70 305 40 430 10 560zM170 790L210 1060 225 980 240 640 210 1000zM305 950L325 780 340 900 325 895zM510 1260L545 1050 575 1130 580 1220 520 1340zM670 1305L690 1010 755 960 775 1040 740 1170 700 1250zM860 1030L870 800 900 760 900 950z"/>
<path fill="#f9d2d6" d="M70 305L130 520 170 880 170 1340 130 1340 100 760zM250 850L285 880 305 960 300 1150 265 1200 255 1000zM385 965L400 1060 440 1220 470 1340 390 1340zM580 1220L610 1200 640 1235 650 1340 590 1340zM790 1040L850 1050 835 1180 815 1180z"/>
</g>
<g transform="translate(910,380) scale(.3333)">
<path fill="#d8e8fb" d="M0 210L20 185 40 350 0 440zM170 680L210 420 300 110 390 115 315 250 270 470 215 640 190 680zM432 145L450 0 520 0 490 60z"/>
<path fill="#f9d2d6" d="M70 310L95 345 125 460 170 680 120 740 95 640 60 400zM390 115L425 145 430 180 410 180z"/>
</g>
<g transform="translate(1000,130) scale(.3333)">
<path fill="#d8e8fb" d="M170 790L240 530 320 600 350 510 385 250 380 555 310 610 260 655 235 770z"/>
</g>
<!-- fib right -->
<path d="M645 200.500H1164" stroke="#111"/>
<path stroke="#111" stroke-dasharray="4 4" d="M645 438.500H1164M645 513.500H1164M645 585.500H1164"/>
<!-- candles zoom10 -->
<g transform="translate(620,190) scale(.3333)">
<path stroke="#111" stroke-width="3" fill="none" d="M17 290V415M25 285V330M33 170V320M40 110V300M47 50V200M52 45V90M60 35V170M67 140V385M75 290V380M83 285V360M90 285V690M98 670V820M105 760V1340M113 860V1340M119 765V1340M125 1140V1340M133 1200V1340M141 1240V1340M147 1090V1300M157 1040V1230M163 970V1130M172 770V1020M180 760V900M190 730V870M198 790V920M207 870V1100M216 850V1090M225 700V900M233 690V760M240 490V790M246 510V720M252 620V880M258 810V1120M265 1090V1220M272 1060V1270M280 960V1180M290 960V1210M297 970V1200M305 850V1030M312 690V970M318 680V760M325 655V920M333 740V890M340 880V1090M350 930V1000M360 900V1000M370 950V1200M380 1040V1130M390 1090V1340M465 1220V1340M475 1205V1340M483 1200V1340M490 1170V1340M500 1210V1340M512 1210V1340M520 1100V1240M530 1115V1200M540 990V1200M550 1000V1120M560 1080V1190M570 1120V1290M580 1150V1340M595 1220V1340M605 1210V1340M615 1200V1340M650 1260V1340M660 1255V1320M675 1100V1300M685 1030V1210M692 960V1090M700 925V1100M708 925V1050M716 960V1110M725 1000V1105M735 1010V1090M745 920V1060M753 875V1000M760 900V1040M770 990V1070M785 990V1070M795 995V1080M805 1020V1305M815 1100V1255M823 1090V1220M835 1020V1150M845 1000V1100M855 840V1020M860 770V860M870 750V800M885 705V800M895 730V830"/>
<g fill="none" stroke="#111" stroke-width="11"><path id="r1g" d="M17 300V370M25 290V300M33 270V290M40 180V270M47 80V180M52 50V80M83 290V345M141 1260V1300M147 1125V1270M157 1080V1205M163 990V1100M172 775V1000M216 860V1060M225 715V890M233 715V730M240 515V740M280 975V1150M297 1000V1180M305 950V1000M312 725V950M318 700V740M350 950V975M360 965V975M465 1265V1340M483 1260V1340M490 1245V1340M500 1240V1340M512 1230V1340M520 1125V1165M530 1120V1190M540 1030V1150M595 1265V1340M650 1265V1340M660 1265V1300M675 1160V1265M685 1065V1165M692 1000V1060M700 970V1095M708 965V1000M735 1040V1060M745 965V1040M753 915V965M815 1105V1250M823 1105V1210M835 1030V1105M845 1010V1060M855 850V1010M860 790V850M870 770V790M885 735V780"/></g>
<g fill="none"><use href="#r1g" stroke="#45c64c" stroke-width="5"/></g>
<g fill="none" stroke="#111" stroke-width="11"><path id="r1r" d="M60 50V145M67 145V365M75 300V365M90 290V680M98 680V770M105 770V1340M113 1000V1340M125 1145V1340M133 1200V1340M180 770V880M190 770V840M198 810V900M207 890V1060M246 515V670M252 670V860M258 820V1100M265 1100V1145M272 1100V1150M290 975V1190M325 700V900M333 750V860M340 920V1030M370 960V1110M380 1045V1110M390 1100V1340M475 1270V1340M550 1030V1100M560 1100V1160M570 1140V1190M580 1190V1340M605 1245V1340M615 1250V1340M716 970V1090M725 1050V1090M760 915V1000M770 1000V1040M785 1005V1030M795 1005V1040M805 1030V1250M895 745V820"/></g>
<g fill="none"><use href="#r1r" stroke="#e4675d" stroke-width="5"/></g>
</g>
<g transform="translate(910,380) scale(.3333)">
<path stroke="#111" stroke-width="3" fill="none" d="M5 150V220M15 135V215M30 155V300M42 250V310M52 280V400M62 360V520M72 490V620M85 555V655M97 550V770M110 700V770M120 700V750M130 700V770M140 690V740M150 700V745M160 700V770M175 610V730M187 380V620M197 420V525M210 380V510M218 325V400M228 285V345M240 240V325M250 235V340M262 270V385M275 290V365M285 225V320M295 40V240M303 40V130M313 70V170M325 135V195M337 150V265M350 100V175M363 65V125M373 -10V105M385 0V130M395 100V235M405 175V270M415 170V270M428 150V370M432 30V270M440 -40V60"/>
<g fill="none" stroke="#111" stroke-width="11"><path id="r2g" d="M5 185V215M15 170V210M85 570V620M150 710V745M175 620V720M187 435V610M210 390V495M218 335V390M228 300V320M240 270V315M285 235V310M295 120V235M303 75V120M350 110V170M373 20V90M432 50V180M440 0V50"/></g>
<g fill="none"><use href="#r2g" stroke="#45c64c" stroke-width="5"/></g>
<g fill="none" stroke="#111" stroke-width="11"><path id="r2r" d="M30 175V260M42 260V290M52 290V380M62 380V510M72 510V580M97 560V710M110 710V770M120 710V745M130 720V770M140 710V740M160 740V770M197 435V515M250 250V310M262 280V310M275 300V315M313 75V145M325 145V175M337 165V175M363 90V120M385 60V110M395 110V200M405 190V200M415 200V220M428 180V250"/></g>
<g fill="none"><use href="#r2r" stroke="#e4675d" stroke-width="5"/></g>
</g>
<g transform="translate(1000,130) scale(.3333)">
<path stroke="#111" stroke-width="3" fill="none" d="M170 730V790M185 660V760M200 690V770M212 680V760M220 635V695M228 530V670M240 495V575M250 500V640M262 540V600M275 545V600M290 545V680M300 575V670M318 570V710M330 480V600M342 465V540M355 515V610M365 420V605M372 345V490M382 243V355"/>
<g fill="none" stroke="#111" stroke-width="11"><path id="r3g" d="M170 735V780M212 685V750M220 660V685M228 530V665M240 505V530M330 500V580M365 430V600M372 350V430M382 268V350"/></g>
<g fill="none"><use href="#r3g" stroke="#45c64c" stroke-width="5"/></g>
<g fill="none" stroke="#111" stroke-width="11"><path id="r3r" d="M185 710V735M200 715V750M250 505V605M262 575V590M275 575V590M290 585V605M300 590V610M318 580V635M342 500V525M355 525V595M382 255V268"/></g>
<g fill="none"><use href="#r3r" stroke="#e4675d" stroke-width="5"/></g>
</g>
<!-- curves right -->
<g fill="none" stroke-linejoin="round">
<g transform="translate(620,190) scale(.3333)">
<path stroke="#db7f7f" stroke-width="7" stroke-dasharray="16 16" d="M10 680L40 480 80 350 110 440 150 650 200 800 230 975 290 915 315 895 360 910 400 1060 440 1160 470 1290 500 1340 570 1280 610 1245 650 1245 690 1265 730 1190 770 1100 790 1040 840 1050 880 990 900 960"/>
<path stroke="#5d3d5d" stroke-width="3.500" d="M10 560L40 430 70 305 100 340 130 520 170 880 210 1060 225 980 250 850 280 870 305 950 325 895 350 930 385 965 400 1060 440 1220 470 1340 520 1270 580 1220 610 1200 640 1235 670 1305 700 1250 740 1170 780 1030 810 1055 850 1050 900 950"/>
<path stroke="#2f20d0" stroke-width="3.500" d="M10 400L30 270 60 90 75 200 85 340 100 760 115 1100 130 1340 150 1280 170 790 190 790 210 1000 240 640 260 870 285 1100 300 1060 325 780 350 950 375 970 390 1090 400 1340 510 1260 545 1050 570 1130 590 1330 670 1250 690 1010 720 1060 755 960 790 1040 815 1180 840 1050 870 800 900 760"/>
<path stroke="#22c4f8" stroke-width="7" d="M205 1335L260 1240 310 1185 370 1110 460 1085 540 1040 620 1005 690 995 760 983 820 985 900 988"/>
<path stroke="#ff3ec0" stroke-width="7" d="M50 1340L95 1240 130 1205 170 1150 210 1105 250 1045 300 1010 330 975 380 920 430 912 500 925 560 925 620 945 690 995 750 1055 820 1125 850 1128 890 1100 900 1098"/>
</g>
<g transform="translate(910,380) scale(.3333)">
<path stroke="#db7f7f" stroke-width="7" stroke-dasharray="16 16" d="M0 430L50 370 110 380 140 490 180 600 210 640 250 550 290 420 320 290 360 190 430 130 520 5"/>
<path stroke="#5d3d5d" stroke-width="3.500" d="M0 440L40 350 70 310 95 345 125 460 170 680 190 680 215 640 240 550 270 470 310 250 390 115 425 145 490 60 520 0"/>
<path stroke="#2f20d0" stroke-width="3.500" d="M0 210L20 185 40 270 60 400 95 640 120 740 160 740 185 560 210 420 240 310 260 290 300 110 325 160 350 160 380 70 410 180 430 180 440 40 450 0"/>
<path stroke="#22c4f8" stroke-width="7" d="M0 415L50 430 110 480 170 545 200 545 250 528 330 525 400 505 460 485 540 405 600 340 650 295"/>
<path stroke="#ff3ec0" stroke-width="7" d="M0 535L25 528 70 535 120 560 200 590 240 590 310 520 400 450 430 435 490 375 530 315 590 260 650 210"/>
</g>
<g transform="translate(1000,130) scale(.3333)">
<path stroke="#db7f7f" stroke-width="7" stroke-dasharray="16 16" d="M230 780L290 640 380 540"/>
<path stroke="#5d3d5d" stroke-width="3.500" d="M230 770L260 655 310 610 370 560"/>
<path stroke="#2f20d0" stroke-width="3.500" d="M170 760L240 530 270 590 320 600 350 510 380 350 385 250"/>
</g>
<path stroke="#a04cf0" stroke-width="2.400" stroke-dasharray="12 9" d="M1072 635L1127 588"/>
</g>
<!-- pivots right -->
<g fill="none" stroke-width="2">
<path stroke="#f00" stroke-dasharray="5 4" d="M1087 164H1142"/>
<path stroke="#f00" d="M1117 184H1131M1127 190.500H1130"/>
<path stroke="#f00" stroke-width="1" stroke-dasharray="4 5" d="M1087 242.500H1146"/>
<path stroke="#f00" d="M1117 234H1122M1117 266H1125"/>
<path stroke="#111" stroke-dasharray="6 3" d="M1087 372H1142"/>
<path stroke="#111" d="M1127 257.500H1130M1127 316H1131"/>
<path stroke="#1a8a1a" stroke-width="1" stroke-dasharray="5 5" d="M1117 348.500H1131"/>
<path stroke="#1a8a1a" stroke-dasharray="5 5" d="M1117 398H1131"/>
<path stroke="#0f7f1f" d="M1117 430H1131M1127 277.500H1130M1127 299H1130"/>
<path stroke="#1a8a1a" stroke-width="1" stroke-dasharray="4 4" d="M1087 450.500H1146"/>
<path stroke="#1a8a1a" stroke-dasharray="5 4" d="M1087 580H1142"/>
</g>
</g>
<text x="645" y="198">26 709 (100,00%)</text><text x="645" y="436">25 331 (61,80%)</text><text x="645" y="511">24 905 (50,00%)</text><text x="645" y="583">24 480 (38,20%)</text>
<text x="1122" y="161" style="fill:#f00">R2 M</text><text x="1122" y="239" style="fill:#f00">R1 M</text><text x="1121" y="369" style="fill:#223">Piv M</text><text x="1122" y="447" style="fill:#1a8a1a">S1 M</text><text x="1122" y="577" style="fill:#1a8a1a">S2 M</text>
<text x="625" y="635">© IT-Finance.com</text><text x="715" y="635" font-style="italic">Données indicatives</text>
<rect x="623.500" y="99.500" width="111" height="17" class="bar"/>
<text x="626" y="112">Prix</text><use href="#wr" x="649" y="100" width="14" height="15"/><use href="#wn" x="666" y="101" width="13" height="13"/><use href="#cl" x="682" y="100" width="14" height="14"/><use href="#ad" x="700" y="100" width="13" height="14"/><use href="#au" x="717" y="100" width="13" height="14"/>
<text x="737" y="112">Année :+Haut 26 705,6 +Bas 23 112,4</text>

<!-- right axis -->
<path d="M1164 116.500h5M1164 149.500h5M1164 495.500h5M1164 530.500h5M1164 564.500h5M1164 599.500h5M1164 164.500h4M1164 184.500h4M1164 190.500h4M1164 212.500h4M1164 233.500h4M1164 245.500h4M1164 257.500h4M1164 266.500h4M1164 277.500h4M1164 296.500h4M1164 313.500h4M1164 322.500h4M1164 348.500h4M1164 372.500h4M1164 398.500h4M1164 430.500h4M1164 445.500h4M1164 457.500h4M1164 478.500h4M1164 576.500h4M1164 590.500h4" stroke="#333"/>
<text x="1170" y="120">27 200</text><text x="1170" y="154" class="b" font-size="12">27 000</text><text x="1170" y="499" class="b" font-size="12">25 000</text><text x="1170" y="534">24 800</text><text x="1170" y="568">24 600</text><text x="1170" y="603">24 400</text>
<text x="1170" y="361">25 800</text><text x="1170" y="392">25 600</text>
<g>
<rect x="1168.500" y="157.500" width="45" height="14" class="tg"/><text x="1170" y="168" style="fill:#f00">26 920,6</text>
<rect x="1168.500" y="173.500" width="45" height="14" class="tg"/><text x="1170" y="184" style="fill:#f00">26 804,2</text>
<rect x="1168.500" y="188.500" width="45" height="14" class="tg"/><text x="1170" y="199" style="fill:#f00">26 764,8</text>
<rect x="1168.500" y="212.500" width="45" height="12" class="tg"/><text x="1170" y="222" style="fill:#f00">26 611,3</text>
<rect x="1168.500" y="205.500" width="45" height="14" fill="url(#yl)" stroke="#7d98a6"/><text x="1170" y="216">26 622,5</text>
<rect x="1168.500" y="229.500" width="45" height="10" class="tg"/><text x="1170" y="237" style="fill:#f00">26 513,0</text>
<rect x="1168.500" y="238.500" width="45" height="14" class="tg"/><text x="1170" y="249" style="fill:#4020e0">26 453,2</text>
<rect x="1168.500" y="254.500" width="45" height="10" class="tg"/><text x="1170" y="261">26 377,3</text>
<rect x="1168.500" y="259.500" width="45" height="14" class="tg"/><text x="1170" y="270" style="fill:#f00">26 329,8</text>
<rect x="1168.500" y="270.500" width="45" height="14" class="tg"/><text x="1170" y="281" style="fill:#128a3a">26 290,2</text>
<rect x="1168.500" y="289.500" width="45" height="14" class="tg"/><text x="1170" y="300" style="fill:#128a3a">26 140,0</text>
<rect x="1168.500" y="306.500" width="45" height="12" class="tg"/><text x="1170" y="317" style="fill:#128a3a">26 052,0</text>
<rect x="1168.500" y="315.500" width="45" height="14" class="tg"/><text x="1170" y="326">26 039,5</text>
<rect x="1168.500" y="341.500" width="45" height="14" class="tg"/><text x="1170" y="352" style="fill:#128a3a">25 855,4</text>
<rect x="1168.500" y="365.500" width="45" height="14" class="tg"/><text x="1170" y="376">25 716,5</text>
<rect x="1168.500" y="391.500" width="45" height="14" class="tg"/><text x="1170" y="402" style="fill:#128a3a">25 565,1</text>
<rect x="1168.500" y="423.500" width="45" height="14" class="tg"/><text x="1170" y="434" style="fill:#128a3a">25 381,0</text>
<rect x="1168.500" y="438.500" width="45" height="14" class="tg"/><text x="1170" y="449" style="fill:#ff3ec0">25 268,8</text>
<rect x="1168.500" y="450.500" width="45" height="14" class="tg"/><text x="1170" y="461" style="fill:#128a3a">25 265,2</text>
<rect x="1168.500" y="471.500" width="45" height="14" class="tg"/><text x="1170" y="482" style="fill:#12b4ee">25 099,0</text>
<rect x="1168.500" y="569.500" width="45" height="14" class="tg"/><text x="1170" y="580" style="fill:#128a3a">24 512,4</text>
<rect x="1168.500" y="583.500" width="45" height="14" class="tg"/><text x="1170" y="594" style="fill:#a04cf0">24 473,8</text>
</g>

<!-- RIGHT RSI -->
<rect x="623.500" y="639.500" width="540" height="99" class="pn"/>
<path d="M623 671.500H1163M623 707.500H1163" stroke="#2020c0"/><path d="M623 689.500H1163" stroke="#e01010"/>
<path d="M623 671V670L630 666 637 661 640 671z" fill="#b88a98"/>
<g fill="none" stroke="#111" stroke-width="3">
<path transform="translate(620,630) scale(.3333)" d="M10 120L30 108 50 92 65 155 80 150 95 205 107 243 112 210 127 230 150 205 172 175 190 175 207 195 235 155 255 195 275 205 290 185 315 162 335 180 350 178 370 190 385 200 400 232 415 197 435 205 450 210 465 180 475 192 490 190 500 172 520 175 545 157 570 170 585 200 600 180 615 182 635 205 655 175 670 175 690 145 710 143 720 162 740 155 750 142 765 157 790 165 803 203 810 180 820 190 840 175 860 140 880 138"/>
<path transform="translate(915,630) scale(.3333)" d="M0 138L20 160 40 170 50 195 70 210 80 205 100 230 115 215 135 212 145 218 165 180 175 150 190 160 210 140 230 133 240 150 260 150 280 117 300 130 320 145 340 135 358 122 375 150 385 175 400 175 410 187 420 145 440 138 460 150 480 117 497 117 505 140 525 142 545 150 570 160 590 137 603 140 613 168 625 135 637 115"/>
</g>
<text x="623" y="687">50</text>
<rect x="623.500" y="640.500" width="217" height="17" class="bar"/><text x="626" y="653">Relative strength index (RSI) (14)</text><use href="#wr" x="790" y="641" width="14" height="15"/><use href="#wn" x="807" y="642" width="13" height="13"/><use href="#cl" x="824" y="642" width="13" height="13"/>
<path d="M1164 645.500h5M1164 662.500h5M1164 680.500h5M1164 698.500h5M1164 716.500h5M1164 725.500h3" stroke="#333"/>
<text x="1170" y="650" class="b" font-size="12">100</text><text x="1170" y="684">60</text><text x="1170" y="702">40</text><text x="1170" y="720">20</text><text x="1170" y="665">80</text>
<rect x="1168.500" y="661.500" width="36" height="14" class="tg"/><text x="1170" y="672">73,477</text>

<!-- RIGHT MACD -->
<rect x="623.500" y="741.500" width="540" height="103" class="pn"/>
<g transform="translate(620,630) scale(.3333)">
<path fill="#dfa5ad" d="M85 385L110 440 140 540 175 585 160 620 145 628 125 600 105 500 80 385zM265 527L290 558 305 550 300 545zM385 545L405 610 430 618 450 605 440 598 400 565 370 525zM620 515L640 540 670 520zM785 463L820 495 850 490 820 485z"/>
<path fill="#a2e2b6" d="M175 582L200 553 215 560 245 500 265 530 220 560zM315 525L320 515 360 525 330 525zM462 602L490 585 530 510 550 490 575 492 585 508 530 550 480 600zM670 520L710 465 750 455 785 463 730 480 680 515zM850 490L885 440 885 460z"/>
<path fill="none" stroke="#ec7a7a" stroke-width="3" d="M85 385L110 440 140 540 170 585 220 560 260 525 300 545 330 525 370 525 400 565 440 598 480 600 530 550 580 510 640 520 680 515 730 480 780 460 820 485 850 490 885 460"/>
<path fill="none" stroke="#3a3ae0" stroke-width="3" d="M80 385L105 500 125 600 145 628 160 620 180 580 200 553 215 560 245 500 265 530 290 558 305 550 320 515 360 525 385 545 405 610 430 618 450 605 465 610 490 585 530 510 550 490 575 492 590 510 620 515 640 540 670 520 710 465 750 455 785 463 820 495 850 490 885 440"/>
</g>
<g transform="translate(915,630) scale(.3333)">
<path fill="#a2e2b6" d="M0 440L40 455 0 460zM165 553L205 490 235 458 265 455 290 433 320 440 345 440 300 443 250 475 200 515zM430 462L440 455 475 450 495 430 510 435 480 455zM622 457L637 442 637 455z"/>
<path fill="#dfa5ad" d="M40 455L70 510 105 565 150 572 165 553 160 555 120 545 80 495zM370 445L410 480 430 462 400 455zM520 437L575 463 605 458 560 448zM605 458L615 465 622 457z"/>
<path fill="none" stroke="#ec7a7a" stroke-width="3" d="M0 460L40 455 80 495 120 545 160 555 200 515 250 475 300 443 360 440 400 455 430 462 480 455 510 435 560 448 600 458 637 455"/>
<path fill="none" stroke="#3a3ae0" stroke-width="3" d="M0 440L40 455 70 510 105 565 150 572 170 550 205 490 235 458 265 455 290 433 320 440 360 440 410 480 440 455 475 450 495 430 540 443 575 463 605 458 615 465 637 442"/>
</g>
<path d="M623 798.500H1163" stroke="#2020c0"/>
<rect x="623.500" y="742.500" width="134" height="17" class="bar"/><text x="626" y="755">MACD (12 26 9)</text><use href="#wr" x="707" y="743" width="14" height="15"/><use href="#wn" x="724" y="745" width="13" height="13"/><use href="#cl" x="741" y="744" width="13" height="13"/>
<path d="M1164 750.500h5M1164 774.500h3M1164 786.500h4M1164 798.500h5M1164 810.500h3M1164 822.500h5M1164 834.500h3" stroke="#333"/>
<text x="1170" y="754">400</text><text x="1170" y="802" class="b" font-size="12">0</text><text x="1170" y="826">-200</text>
<rect x="1168.500" y="765.500" width="36" height="14" class="tg"/><text x="1170" y="776" style="fill:#3a3ae0">178,32</text>
<rect x="1168.500" y="779.500" width="36" height="14" class="tg"/><text x="1170" y="790" style="fill:#e05a5a">143,01</text>

<!-- RIGHT MOMENTUM -->
<rect x="623.500" y="847.500" width="540" height="73" class="pn"/>
<g clip-path="url(#rup)"><use href="#m2" fill="#98c6ae"/></g>
<g clip-path="url(#rdn)"><use href="#m2" fill="#bfa3b2"/></g>
<use href="#m2" fill="none" stroke="#703a3a" stroke-width="3"/>
<path d="M623 872.500H1163" stroke="#2020c0"/>
<rect x="623.500" y="848.500" width="131" height="17" class="bar"/><text x="626" y="861">Momentum (12)</text><use href="#wr" x="704" y="849" width="14" height="15"/><use href="#wn" x="721" y="850" width="13" height="13"/><use href="#cl" x="738" y="850" width="13" height="13"/>
<path d="M1164 855.500h5M1164 864.500h3M1164 872.500h5M1164 881.500h3M1164 890.500h5M1164 899.500h3M1164 908.500h5" stroke="#333"/>
<text x="1170" y="857" font-size="11">1 000</text><text x="1170" y="876" class="b" font-size="12">0</text><text x="1170" y="894">-1 000</text><text x="1170" y="912">-2 000</text>
<rect x="1168.500" y="854.500" width="36" height="14" class="tg"/><text x="1170" y="865">628,20</text>

<!-- right x axis -->
<path d="M647.500 921v4M706.500 921v4M767.500 921v4M828.500 921v4M894.500 921v4M955.500 921v4M1021.500 921v4M1087.500 921v4M1149.500 921v4" stroke="#333"/>
<g text-anchor="middle"><text x="647" y="937">févr.</text><text x="706" y="937">mars</text><text x="767" y="937">avr.</text><text x="828" y="937">mai</text><text x="893" y="937">juin</text><text x="955" y="937">juil.</text><text x="1021" y="937">août</text><text x="1087" y="937">sept.</text><text x="1149" y="937">oct.</text></g>

<!-- right bottom bar -->
<rect x="623" y="942" width="592" height="29" fill="url(#bt)"/><path d="M623 941.500H1215" stroke="#7fa0b0"/>
<rect x="618" y="971" width="597" height="4" fill="#6b9bee"/>
<rect x="616" y="975" width="599" height="2" fill="#222"/>
<rect x="623" y="947" width="67" height="22" rx="3" fill="url(#sh)"/><use href="#sha" x="627" y="950" width="15" height="15"/><text x="646" y="962" style="fill:#fff" font-size="11">Partager</text>
<use href="#lk" x="700" y="950" width="16" height="18"/><use href="#dc" x="727" y="951" width="14" height="16"/><use href="#br" x="754" y="951" width="16" height="16"/>
<rect x="777.500" y="951.500" width="323" height="15" rx="3" fill="#98b4c1" stroke="#7a97a4"/><rect x="778.500" y="952.500" width="14" height="13" rx="3" fill="#cadbe3" stroke="#7a97a4"/><path d="M787.500 956v6l-4-3z" fill="#111"/>
<rect x="1077" y="952.500" width="9" height="13" rx="2" fill="#b4cbd6" stroke="#8aa5b2"/><path d="M1078 956h7M1078 959h7M1078 962h7" stroke="#667"/>
<rect x="1086.500" y="952.500" width="14" height="13" rx="3" fill="#cadbe3" stroke="#7a97a4"/><path d="M1091.500 956v6l4-3z" fill="#111"/>
<use href="#wc" x="1108" y="950" width="17" height="18"/><use href="#za" x="1134" y="949" width="20" height="20"/><use href="#zm" x="1163" y="950" width="18" height="18"/><use href="#zp" x="1191" y="950" width="18" height="18"/>
</svg>
</body></html>
